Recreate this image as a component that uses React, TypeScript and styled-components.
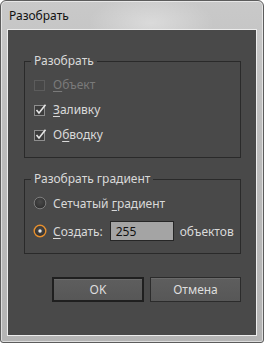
import React from "react";
import styled, { createGlobalStyle } from "styled-components";

const GlobalStyle = createGlobalStyle`
  html, body {
    margin: 0;
    padding: 0;
    background: #ffffff;
  }
  body {
    font-family: "Noto Sans", "DejaVu Sans", sans-serif;
    font-size: 12px;
  }
`;

const TEXT = "#d9d9d9";

const Window = styled.div`
  box-sizing: border-box;
  width: 264px;
  height: 343px;
  display: flex;
  flex-direction: column;
  padding: 0 6px 6px 6px;
  border: 1px solid #5c5c5c;
  border-radius: 6px 6px 3px 3px;
  box-shadow: inset 0 0 0 1px rgba(255, 255, 255, 0.55);
  background:
    radial-gradient(ellipse 90px 40px at 150px 22px, rgba(255, 255, 255, 0.35), rgba(255, 255, 255, 0) 70%),
    linear-gradient(180deg, #c9c9c9 0%, #bcbcbc 40%, #b4b4b4 100%);
`;

const TitleBar = styled.div`
  height: 28px;
  display: flex;
  align-items: center;
  padding-left: 2px;
  color: #111;
  font-size: 12px;
`;

const Client = styled.div`
  flex: 1;
  box-sizing: border-box;
  border: 1px solid #ececec;
  background: #494949;
  padding: 23px 15px 0 16px;
  display: flex;
  flex-direction: column;
  color: ${TEXT};
`;

const Group = styled.fieldset<{ $gap?: number }>`
  margin: ${({ $gap }) => $gap ?? 0}px 0 0 0;
  padding: 0 10px 10px 9px;
  border: 1px solid #2a2a2a;
  min-width: 0;
`;

const Legend = styled.legend`
  margin-left: -3px;
  padding: 0 3px;
  line-height: 16px;
  color: ${TEXT};
`;

const List = styled.div<{ $top: number }>`
  display: flex;
  flex-direction: column;
  padding-top: ${({ $top }) => $top}px;
`;

const Row = styled.div<{ $disabled?: boolean; $h?: number }>`
  height: ${({ $h }) => $h ?? 25}px;
  display: flex;
  align-items: center;
  gap: 6px;
  color: ${({ $disabled }) => ($disabled ? "#7a7a7a" : TEXT)};
  white-space: nowrap;
`;

const Key = styled.u`
  text-underline-offset: 2px;
`;

const NumberField = styled.input`
  box-sizing: border-box;
  width: 64px;
  height: 20px;
  margin-left: 1px;
  padding: 0 5px;
  border: 1px solid #262626;
  background: #a4a4a4;
  color: #111;
  font-family: inherit;
  font-size: 12px;
  outline: none;
`;

const Buttons = styled.div`
  display: flex;
  justify-content: flex-end;
  gap: 6px;
  margin-top: 23px;
`;

const Button = styled.button<{ $default?: boolean }>`
  box-sizing: border-box;
  width: ${({ $default }) => ($default ? 92 : 91)}px;
  height: 25px;
  border: ${({ $default }) => ($default ? "2px solid #1f1f1f" : "1px solid #2b2b2b")};
  background: linear-gradient(180deg, #5e5e5e 0%, #575757 100%);
  box-shadow: inset 0 1px 0 rgba(255, 255, 255, 0.08);
  color: #dedede;
  font-family: inherit;
  font-size: 12px;
  padding: 0;
`;

const CheckBox = ({ checked, disabled }: { checked?: boolean; disabled?: boolean }) => (
  <svg width="14" height="14" viewBox="0 0 14 14" style={{ flex: "none", marginLeft: -1 }}>
    <rect
      x="1.5"
      y="2.5"
      width="10"
      height="10"
      fill={disabled ? "#474747" : "#3c3c3c"}
      stroke={disabled ? "#5c5c5c" : "#8e8e8e"}
    />
    {checked && (
      <path d="M3.5 7 L6 10 L12.5 1.8" fill="none" stroke="#e6e6e6" strokeWidth="1.6" />
    )}
  </svg>
);

const Radio = ({ checked }: { checked?: boolean }) => (
  <svg width="14" height="14" viewBox="0 0 14 14" style={{ flex: "none", marginLeft: -1 }}>
    <defs>
      <radialGradient id="rg" cx="50%" cy="40%" r="60%">
        <stop offset="0%" stopColor="#4a4a4a" />
        <stop offset="100%" stopColor="#2f2f2f" />
      </radialGradient>
    </defs>
    <circle
      cx="7"
      cy="7"
      r="5.8"
      fill="url(#rg)"
      stroke={checked ? "#e8902e" : "#7d7d7d"}
      strokeWidth={checked ? 1.4 : 1}
    />
    {checked && <circle cx="7" cy="7" r="1.7" fill="#e8e8e8" />}
  </svg>
);

const App = () => (
  <>
    <GlobalStyle />
    <Window>
      <TitleBar>Разобрать</TitleBar>
      <Client>
        <Group>
          <Legend>Разобрать</Legend>
          <List $top={3}>
            <Row $disabled>
              <CheckBox disabled />
              <span>
                <Key>О</Key>бъект
              </span>
            </Row>
            <Row>
              <CheckBox checked />
              <span>
                <Key>З</Key>аливку
              </span>
            </Row>
            <Row>
              <CheckBox checked />
              <span>
                О<Key>б</Key>водку
              </span>
            </Row>
          </List>
        </Group>
        <Group $gap={13}>
          <Legend>Разобрать градиент</Legend>
          <List $top={4}>
            <Row $h={24}>
              <Radio />
              <span>
                Сетчатый <Key>г</Key>радиент
              </span>
            </Row>
            <Row $h={24} style={{ marginTop: 4 }}>
              <Radio checked />
              <span>
                <Key>С</Key>оздать:
              </span>
              <NumberField defaultValue="255" />
              <span>объектов</span>
            </Row>
          </List>
        </Group>
        <Buttons>
          <Button $default>OK</Button>
          <Button>Отмена</Button>
        </Buttons>
      </Client>
    </Window>
  </>
);

export default App;
